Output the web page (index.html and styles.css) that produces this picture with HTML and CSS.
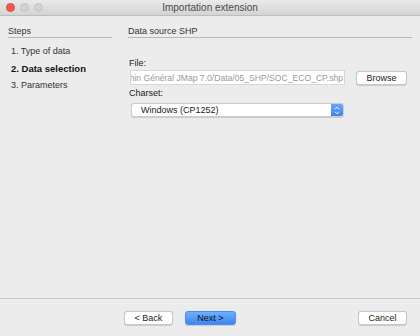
FILE: index.html
```html
<!DOCTYPE html>
<html lang="en">
<head>
    <meta charset="UTF-8">
    <title>Importation extension</title>
    <link rel="stylesheet" href="styles.css">
</head>
<body>
<div class="window">
    <div class="titlebar">
        <div class="lights">
            <span class="light close"></span>
            <span class="light"></span>
            <span class="light"></span>
        </div>
        <div class="title">Importation extension</div>
    </div>
    <div class="main">
        <div class="steps">
            <div class="section-title">Steps</div>
            <ul class="step-list">
                <li>1. Type of data</li>
                <li class="current">2. Data selection</li>
                <li>3. Parameters</li>
            </ul>
        </div>
        <div class="content">
            <div class="section-title">Data source SHP</div>
            <div class="field-label file-label">File:</div>
            <div class="file-row">
                <div class="text-field"><span>hin Général JMap 7.0/Data/05_SHP/SOC_ECO_CP.shp</span></div>
                <button class="button browse">Browse</button>
            </div>
            <div class="field-label">Charset:</div>
            <div class="select">
                <span class="select-text">Windows (CP1252)</span>
                <span class="stepper">
                    <svg width="6" height="9" viewBox="0 0 6 9"><path d="M1 3.2 L3 1.2 L5 3.2 M1 5.8 L3 7.8 L5 5.8" fill="none" stroke="#fff" stroke-width="1"/></svg>
                </span>
            </div>
        </div>
    </div>
    <div class="footer">
        <div class="nav-buttons">
            <button class="button back">&lt; Back</button>
            <button class="button primary">Next &gt;</button>
        </div>
        <button class="button cancel">Cancel</button>
    </div>
</div>
</body>
</html>
```

FILE: styles.css
```css
html, body {
    margin: 0;
    padding: 0;
}
body {
    font-family: "Liberation Sans", Arial, sans-serif;
    font-size: 9px;
    line-height: 12px;
    color: #222;
    background-color: #ececec;
}
.window {
    width: 420px;
    height: 336px;
    display: flex;
    flex-direction: column;
    background-color: #ececec;
}
.titlebar {
    height: 16px;
    flex: none;
    display: flex;
    align-items: center;
    position: relative;
    background: linear-gradient(#e9e9e9, #d4d4d4);
    border-bottom: 1px solid #bdbdbd;
    box-sizing: border-box;
}
.lights {
    display: flex;
    gap: 5px;
    padding-left: 6px;
}
.light {
    width: 9px;
    height: 9px;
    border-radius: 50%;
    background-color: #d2d2d2;
    border: 0.5px solid #c4c4c4;
    box-sizing: border-box;
}
.light.close {
    background-color: #f05a52;
    border-color: #de4a42;
}
.title {
    position: absolute;
    left: 0;
    right: 0;
    text-align: center;
    color: #4a4a4a;
    font-size: 10px;
}
.main {
    flex: 1;
    display: flex;
    padding: 9px 8px 0 8px;
}
.steps {
    width: 104px;
    flex: none;
}
.section-title {
    border-bottom: 1px solid #b8b8b8;
    color: #333;
}
.step-list {
    list-style: none;
    margin: 0;
    padding: 5px 0 0 3px;
}
.step-list li {
    height: 17px;
    line-height: 17px;
    color: #333;
}
.step-list li.current {
    font-weight: bold;
    font-size: 9.5px;
    color: #111;
}
.content {
    flex: 1;
    margin-left: 16px;
}
.field-label {
    color: #222;
    margin-left: 1px;
}
.file-label {
    margin-top: 19px;
}
.file-row {
    display: flex;
    align-items: center;
    margin: 1px 0 2px 2px;
}
.text-field {
    width: 215px;
    height: 15px;
    box-sizing: border-box;
    border: 1px solid #d6d6d6;
    background-color: #fff;
    overflow: hidden;
    display: flex;
    justify-content: flex-end;
    align-items: center;
    white-space: nowrap;
    padding-right: 1px;
    font-size: 8.6px;
}
.text-field span {
    color: #9a9a9a;
    flex: none;
}
.button {
    font-family: "Liberation Sans", Arial, sans-serif;
    font-size: 9px;
    height: 14px;
    padding: 0;
    border: 1px solid #c8c8c8;
    border-radius: 3px;
    background-color: #fff;
    color: #222;
    box-shadow: 0 0.5px 1px rgba(0, 0, 0, 0.15);
}
.browse {
    width: 51px;
    margin-left: 11px;
}
.select {
    width: 213px;
    height: 14px;
    box-sizing: border-box;
    margin: 4px 0 0 3px;
    display: flex;
    align-items: center;
    border: 1px solid #cdcdcd;
    border-radius: 3px;
    background-color: #fff;
    box-shadow: 0 0.5px 1px rgba(0, 0, 0, 0.15);
    overflow: hidden;
}
.select-text {
    flex: 1;
    padding-left: 9px;
}
.stepper {
    width: 12px;
    height: 100%;
    display: flex;
    align-items: center;
    justify-content: center;
    background: linear-gradient(#6aa7fa, #3b84f3);
}
.footer {
    height: 38px;
    flex: none;
    border-top: 1px solid #c6c6c6;
    display: flex;
    align-items: center;
    justify-content: space-between;
    padding: 1px 13px 0 124px;
    box-sizing: border-box;
}
.nav-buttons {
    display: flex;
    gap: 12px;
}
.back {
    width: 49px;
}
.primary {
    width: 51px;
    border-color: #4b8ef2;
    background: linear-gradient(#6fb0fb, #3d85f4);
    color: #111;
}
.cancel {
    width: 49px;
}
```
